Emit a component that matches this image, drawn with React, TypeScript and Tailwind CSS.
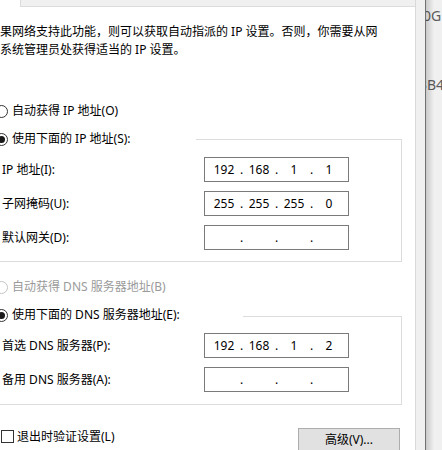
import React from 'react'

type IpParts = [string, string, string, string]

function Radio({ checked, disabled }: { checked?: boolean; disabled?: boolean }) {
  return (
    <span
      className={
        'relative -ml-[5px] flex h-[13px] w-[13px] shrink-0 items-center justify-center rounded-full border bg-white ' +
        (disabled ? 'border-[#c4c4c4]' : 'border-[#333333]')
      }
    >
      {checked && <span className="h-[7px] w-[7px] rounded-full bg-[#1a1a1a]" />}
    </span>
  )
}

function IpBox({ parts }: { parts: IpParts }) {
  return (
    <div className="flex h-[25px] w-[145px] shrink-0 items-center border border-[#7a7a7a] bg-white pl-[4px]">
      {parts.map((p, i) => (
        <React.Fragment key={i}>
          <span className="w-[30px] text-center">{p}</span>
          {i < 3 && <span className="w-[5px] text-center">.</span>}
        </React.Fragment>
      ))}
    </div>
  )
}

function FieldRow({ label, parts }: { label: string; parts: IpParts }) {
  return (
    <div className="flex h-[25px] items-center">
      <span className="w-[204px] shrink-0 pl-[2px]">{label}</span>
      <IpBox parts={parts} />
    </div>
  )
}

const empty: IpParts = ['', '', '', '']

export default function App() {
  return (
    <div className="flex h-[450px] w-[442px] overflow-hidden bg-[#f0f0f0] font-['Noto_Sans','Noto_Sans_CJK_SC',sans-serif] text-[12px] leading-[18px] text-black">
      {/* 属性页 */}
      <div className="flex w-[416px] shrink-0 flex-col overflow-hidden border-r border-[#d9d9d9] bg-white">
        <div className="ml-[20px] h-[7px] shrink-0 border-b border-l border-[#dcdcdc] bg-[#f0f0f0]" />

        <p className="mt-[16px] whitespace-nowrap">
          果网络支持此功能，则可以获取自动指派的 IP 设置。否则，你需要从网
          <br />
          系统管理员处获得适当的 IP 设置。
        </p>

        {/* IP */}
        <div className="mt-[43px] flex h-[18px] items-center gap-[4px]">
          <Radio />
          <span>自动获得 IP 地址(O)</span>
        </div>
        <div className="mt-[10px] flex h-[18px] w-[402px] items-stretch">
          <div className="flex items-center gap-[4px]">
            <Radio checked />
            <span>使用下面的 IP 地址(S):</span>
          </div>
          <div className="ml-auto mt-[9px] w-[206px] border-r border-t border-[#dcdcdc]" />
        </div>
        <div className="flex w-[402px] flex-col gap-[9px] border-b border-r border-[#dcdcdc] pb-[11px] pt-[9px]">
          <FieldRow label="IP 地址(I):" parts={['192', '168', '1', '1']} />
          <FieldRow label="子网掩码(U):" parts={['255', '255', '255', '0']} />
          <FieldRow label="默认网关(D):" parts={empty} />
        </div>

        {/* DNS */}
        <div className="mt-[16px] flex h-[18px] items-center gap-[4px] text-[#9a9a9a]">
          <Radio disabled />
          <span>自动获得 DNS 服务器地址(B)</span>
        </div>
        <div className="mt-[10px] flex h-[18px] w-[402px] items-stretch">
          <div className="flex items-center gap-[4px]">
            <Radio checked />
            <span>使用下面的 DNS 服务器地址(E):</span>
          </div>
          <div className="ml-auto mt-[10px] w-[159px] border-r border-t border-[#dcdcdc]" />
        </div>
        <div className="flex w-[402px] flex-col gap-[9px] border-b border-r border-[#dcdcdc] pb-[12px] pt-[9px]">
          <FieldRow label="首选 DNS 服务器(P):" parts={['192', '168', '1', '2']} />
          <FieldRow label="备用 DNS 服务器(A):" parts={empty} />
        </div>

        {/* 底部 */}
        <div className="mt-[23px] flex w-[400px] items-start">
          <div className="mt-[2px] flex h-[13px] items-center gap-[3px] pl-[1px]">
            <span className="h-[13px] w-[13px] shrink-0 border border-[#333333] bg-white" />
            <span>退出时验证设置(L)</span>
          </div>
          <button className="ml-auto flex h-[23px] w-[102px] items-center justify-center border border-[#adadad] bg-[#e1e1e1]">
            高级(V)...
          </button>
        </div>
      </div>

      <div className="w-[9px] shrink-0 bg-[#f0f0f0]" />
      <div className="w-px shrink-0 bg-[#707070]" />

      {/* 后面的窗口 */}
      <div className="relative flex-1 overflow-hidden bg-[#f0f0f0] text-[14px] leading-[18px] text-[#5c5c5c]">
        <div className="-ml-[3px] mt-[7px] whitespace-nowrap">0G</div>
        <div className="-ml-[7px] mt-[51px] whitespace-nowrap">3B4</div>
        <div className="absolute inset-y-0 left-0 w-[8px] bg-gradient-to-r from-[rgba(0,0,0,0.16)] to-transparent" />
      </div>
    </div>
  )
}
